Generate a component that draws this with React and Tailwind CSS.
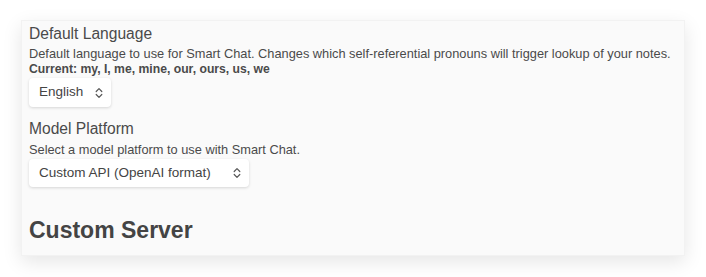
import React from "react"

const Chevrons = () => (
  <svg width="8" height="12" viewBox="0 0 8 12" fill="none" stroke="#555" strokeWidth="1.2" strokeLinecap="round" strokeLinejoin="round">
    <path d="M1.2 4.5 L4 1.7 L6.8 4.5" />
    <path d="M1.2 7.5 L4 10.3 L6.8 7.5" />
  </svg>
)

const Select = ({ label, gap, height }) => (
  <div className={`inline-flex items-center ${height} pl-[10px] pr-[8px] bg-white rounded-[4px] shadow-[0_1px_3px_rgba(0,0,0,0.15)] text-[13.5px] text-[#444] ${gap}`}>
    <span>{label}</span>
    <Chevrons />
  </div>
)

const App = () => {
  return (
    <div className="w-[706px] h-[277px] bg-white pt-[20px] pl-[21px]" style={{ fontFamily: '"Liberation Sans", Arial, sans-serif' }}>
      <div className="w-[664px] h-[236px] bg-[#fafafa] border border-[#f2f2f2] shadow-[0_6px_18px_rgba(0,0,0,0.1)] pl-[7px] pt-[3px] text-[#4a4a4a]">
        <h3 className="text-[15.6px] leading-[20px]">Default Language</h3>
        <p className="text-[12.8px] leading-[16px] mt-[2px]">
          Default language to use for Smart Chat. Changes which self-referential pronouns will trigger lookup of your notes.
        </p>
        <p className="text-[12.2px] leading-[15px] font-bold">Current: my, I, me, mine, our, ours, us, we</p>
        <div className="mt-[1px] flex">
          <Select label="English" gap="gap-[12px]" height="h-[29px]" />
        </div>
        <h3 className="text-[15.6px] leading-[20px] mt-[12px]">Model Platform</h3>
        <p className="text-[12.8px] leading-[16px] mt-[3px]">Select a model platform to use with Smart Chat.</p>
        <div className="mt-[1px] flex">
          <Select label="Custom API (OpenAI format)" gap="gap-[22px]" height="h-[28px]" />
        </div>
        <h2 className="text-[23px] leading-[28px] font-bold mt-[29px] text-[#444]">Custom Server</h2>
      </div>
    </div>
  )
}

export default App
